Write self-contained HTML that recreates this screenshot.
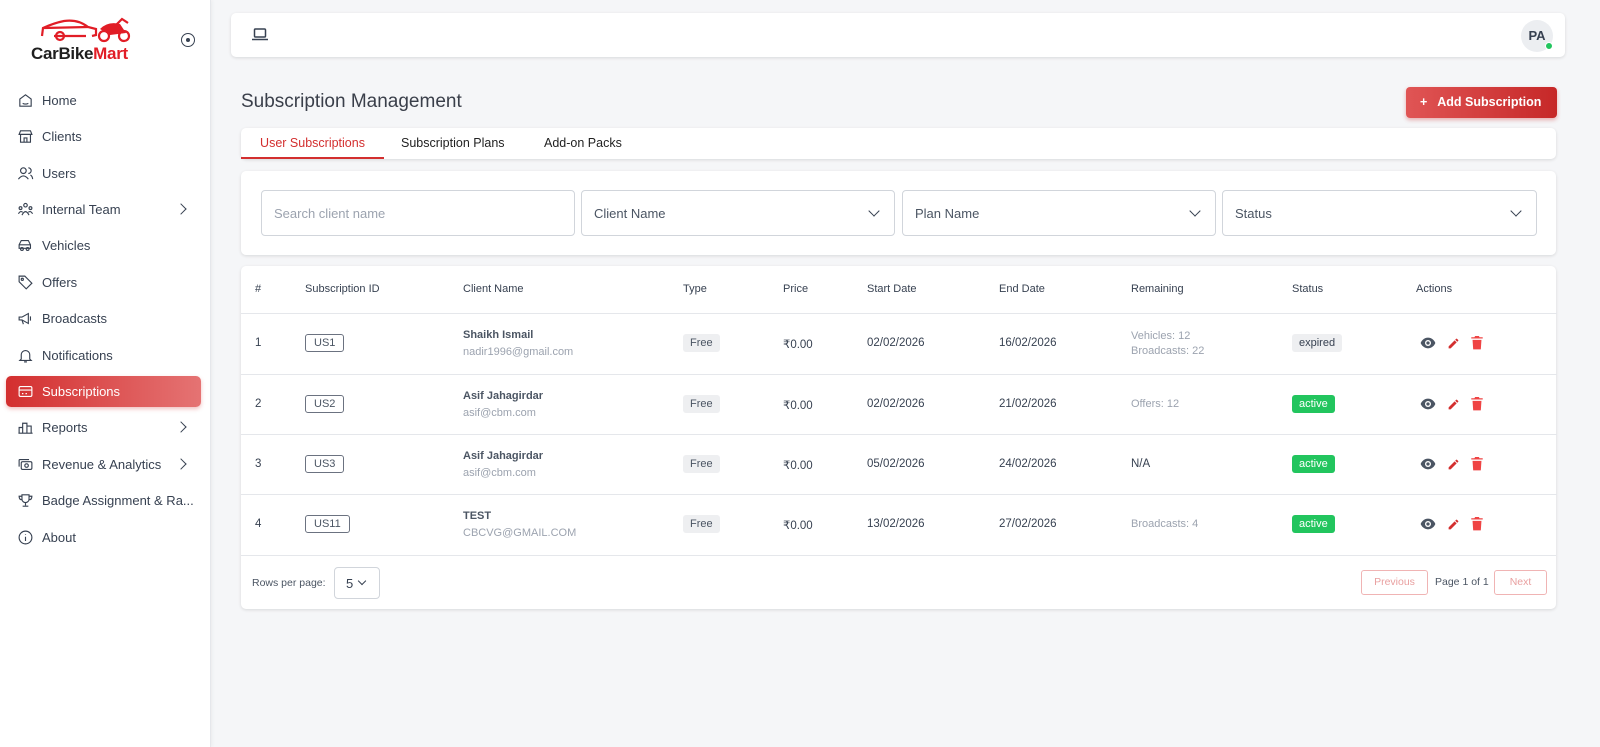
<!DOCTYPE html>
<html><head><meta charset="utf-8"><style>
*{box-sizing:border-box;margin:0;padding:0}
body{width:1600px;height:747px;background:#f5f6f8;font-family:"Liberation Sans",sans-serif;color:#374151;position:relative;overflow:hidden}
.side{position:absolute;left:0;top:0;width:211px;height:747px;background:#fff;border-right:1px solid #e5e7eb;box-shadow:1px 0 4px rgba(0,0,0,.05)}
.nav{position:absolute;left:6px;width:195px;height:31px;display:flex;align-items:center;padding-left:11px;font-size:13px;color:#374151}
.nav svg{width:17px;height:17px;margin-right:8px;stroke:#374151;fill:none;stroke-width:1.6}
.nav .ch{position:absolute;right:16px;width:8px;height:8px;border-right:1.6px solid #374151;border-top:1.6px solid #374151;transform:rotate(45deg);top:11px}
.nav.act{background:linear-gradient(90deg,#d32f2f,#e57373);color:#fff;border-radius:5px;box-shadow:0 2px 4px rgba(200,0,0,.25)}
.nav.act svg{stroke:#fff}
.card{position:absolute;background:#fff;border-radius:5px;box-shadow:0 1px 3px rgba(0,0,0,.12)}
.sel{position:absolute;top:19px;height:46px;border:1px solid #d1d5db;border-radius:4px;font-size:13px;color:#4b5563;padding:15px 12px}
.sel.dd:after{content:"";position:absolute;right:16px;top:16px;width:7px;height:7px;border-right:1.5px solid #374151;border-bottom:1.5px solid #374151;transform:rotate(45deg)}
.th{position:absolute;top:17px;font-size:11px;color:#374151}
.row{position:absolute;left:0;width:1316px;height:61px;border-top:1px solid #e5e7eb;font-size:11.5px}
.row>div{position:absolute}
.id{top:20px;left:64px;border:1px solid #6b7280;border-radius:3px;padding:2px 8px;font-size:11px;color:#4b5563}
.nm{top:15px;left:222px;font-weight:bold;font-size:11px;color:#4b5563}
.em{top:32px;left:222px;color:#9ca3af;font-size:11px}
.fr{top:20px;left:442px;background:#eeeff1;border-radius:3px;padding:3px 7px;font-size:11px;color:#4b5563}
.st{top:20px;left:1051px;border-radius:3px;padding:3px 7px;font-size:11px}
.ac{top:22px;left:1179px;display:flex;gap:11px;align-items:center}
</style></head><body>
<div class="side">
<svg style="position:absolute;left:40px;top:15px" width="92" height="30" viewBox="0 0 92 30"><g fill="none" stroke="#e11d26" stroke-width="2.2"><path d="M2 21 L3 13 Q14 8 24 6 Q38 4 48 12 L56 14 L56 20 L52 21"/><path d="M4 13 L48 12 M14 21 H46"/><circle cx="20" cy="21" r="4"/><circle cx="64" cy="21" r="5"/><circle cx="84" cy="21" r="5"/><path d="M76 10 L82 4 L88 8"/></g><path d="M60 14 Q68 6 80 9 L86 18 L70 20Z" fill="#e11d26"/></svg>
<div style="position:absolute;left:31px;top:44px;font-weight:bold;font-size:17px;letter-spacing:-.3px"><span style="color:#1f1f1f">CarBike</span><span style="color:#e11d26">Mart</span></div>
<div style="position:absolute;left:181px;top:33px;width:14px;height:14px;border:1.6px solid #374151;border-radius:50%"><div style="width:4px;height:4px;background:#374151;border-radius:50%;margin:3.5px"></div></div>
<div class="nav" style="top:85px"><svg viewBox="0 0 24 24"><path d="M4 10 L12 4 L20 10 V20 H4Z"/><path d="M8 16 Q12 18 16 16"/></svg>Home</div>
<div class="nav" style="top:121px"><svg viewBox="0 0 24 24"><path d="M3 9 L5 4 H19 L21 9 H3Z M5 9 V20 H19 V9 M10 20 V14 H14 V20"/></svg>Clients</div>
<div class="nav" style="top:158px"><svg viewBox="0 0 24 24"><circle cx="9" cy="8" r="4"/><path d="M2 20 Q9 11 16 20 M16 4 A4 4 0 0 1 16 12 M19 14 Q22 16 22 20"/></svg>Users</div>
<div class="nav" style="top:194px"><svg viewBox="0 0 24 24"><circle cx="12" cy="6" r="2.5"/><circle cx="5" cy="10" r="2"/><circle cx="19" cy="10" r="2"/><path d="M7 20 Q12 10 17 20 M2 18 Q5 13 8 16 M22 18 Q19 13 16 16"/></svg>Internal Team<span class="ch"></span></div>
<div class="nav" style="top:230px"><svg viewBox="0 0 24 24"><path d="M3 16 V11 L6 5 H16 L19 11 V16 H3Z M3 11 H19"/><circle cx="7" cy="17" r="2"/><circle cx="15" cy="17" r="2"/></svg>Vehicles</div>
<div class="nav" style="top:267px"><svg viewBox="0 0 24 24"><path d="M3 3 H11 L21 13 L13 21 L3 11Z"/><circle cx="7.5" cy="7.5" r="1.5"/></svg>Offers</div>
<div class="nav" style="top:303px"><svg viewBox="0 0 24 24"><path d="M3 10 V14 H7 L16 19 V5 L7 10Z M19 9 V15 M7 14 L9 20"/></svg>Broadcasts</div>
<div class="nav" style="top:340px"><svg viewBox="0 0 24 24"><path d="M6 17 V11 A6 6 0 0 1 18 11 V17 L20 19 H4Z M10 21 H14"/></svg>Notifications</div>
<div class="nav act" style="top:376px"><svg viewBox="0 0 24 24"><rect x="3" y="5" width="18" height="14" rx="2"/><path d="M3 10 H21 M7 15 H9 M12 15 H14"/></svg>Subscriptions</div>
<div class="nav" style="top:412px"><svg viewBox="0 0 24 24"><path d="M3 20 V12 H8 V20 M8 20 V6 H14 V20 M14 20 V10 H20 V20 M2 20 H22"/></svg>Reports<span class="ch"></span></div>
<div class="nav" style="top:449px"><svg viewBox="0 0 24 24"><rect x="6" y="8" width="15" height="11" rx="2"/><path d="M3 15 V6 Q3 5 4 5 H17"/><circle cx="13.5" cy="13.5" r="2.5"/></svg>Revenue &amp; Analytics<span class="ch"></span></div>
<div class="nav" style="top:485px"><svg viewBox="0 0 24 24"><path d="M7 4 H17 V10 A5 5 0 0 1 7 10Z M7 6 H3 Q3 11 7 11 M17 6 H21 Q21 11 17 11 M12 15 V19 M8 20 H16"/></svg>Badge Assignment &amp; Ra...</div>
<div class="nav" style="top:522px"><svg viewBox="0 0 24 24"><circle cx="12" cy="12" r="9"/><path d="M12 11 V17 M12 7 V8"/></svg>About</div>
</div>

<div class="card" style="left:231px;top:13px;width:1334px;height:44px">
<svg style="position:absolute;left:21px;top:15px" width="16" height="13" viewBox="0 0 16 13" fill="none" stroke="#374151" stroke-width="1.5"><rect x="2.5" y="1" width="11" height="8" rx="1"/><path d="M0 11.5 H16"/></svg>
<div style="position:absolute;left:1290px;top:7px;width:32px;height:32px;border-radius:50%;background:#eceef1;font-size:13px;font-weight:bold;color:#374151;text-align:center;line-height:32px">PA</div>
<div style="position:absolute;left:1314px;top:29px;width:8px;height:8px;border-radius:50%;background:#22c55e;border:1px solid #fff"></div>
</div>

<div style="position:absolute;left:241px;top:91px;font-size:19px;color:#3a3f4a">Subscription Management</div>
<div style="position:absolute;left:1406px;top:87px;width:151px;height:31px;border-radius:4px;background:linear-gradient(90deg,#e05555,#c62828);color:#fff;font-size:12.5px;font-weight:bold;line-height:31px;padding-left:14px;box-shadow:0 2px 4px rgba(200,0,0,.3)">+&nbsp;&nbsp; Add Subscription</div>

<div class="card" style="left:241px;top:128px;width:1315px;height:31px;font-size:12.5px">
<div style="position:absolute;left:0;top:0;width:143px;height:31px;border-bottom:2px solid #d32f2f;color:#d32f2f;text-align:center;line-height:31px">User Subscriptions</div>
<div style="position:absolute;left:160px;top:0;line-height:31px;color:#222">Subscription Plans</div>
<div style="position:absolute;left:303px;top:0;line-height:31px;color:#222">Add-on Packs</div>
</div>

<div class="card" style="left:241px;top:171px;width:1315px;height:84px">
<div class="sel" style="left:20px;width:314px;color:#9ca3af">Search client name</div>
<div class="sel dd" style="left:340px;width:314px">Client Name</div>
<div class="sel dd" style="left:661px;width:314px">Plan Name</div>
<div class="sel dd" style="left:981px;width:315px">Status</div>
</div>

<div class="card" style="left:241px;top:266px;width:1315px;height:343px">
<div class="th" style="left:14px">#</div><div class="th" style="left:64px">Subscription ID</div><div class="th" style="left:222px">Client Name</div><div class="th" style="left:442px">Type</div><div class="th" style="left:542px">Price</div><div class="th" style="left:626px">Start Date</div><div class="th" style="left:758px">End Date</div><div class="th" style="left:890px">Remaining</div><div class="th" style="left:1051px">Status</div><div class="th" style="left:1175px">Actions</div>

<div class="row" style="top:47px"><div style="top:23px;left:14px">1</div><div class="id">US1</div><div class="nm">Shaikh Ismail</div><div class="em">nadir1996@gmail.com</div><div class="fr">Free</div><div style="top:23px;left:542px">₹0.00</div><div style="top:23px;left:626px">02/02/2026</div><div style="top:23px;left:758px">16/02/2026</div><div style="top:15px;left:890px;color:#9ca3af;font-size:11px;line-height:15px">Vehicles: 12<br>Broadcasts: 22</div><div class="st" style="background:#eeeff1;color:#374151">expired</div><div class="ac">AC</div></div>
<div class="row" style="top:108px"><div style="top:23px;left:14px">2</div><div class="id">US2</div><div class="nm">Asif Jahagirdar</div><div class="em">asif@cbm.com</div><div class="fr">Free</div><div style="top:23px;left:542px">₹0.00</div><div style="top:23px;left:626px">02/02/2026</div><div style="top:23px;left:758px">21/02/2026</div><div style="top:23px;left:890px;color:#9ca3af;font-size:11px">Offers: 12</div><div class="st" style="background:#22c55e;color:#fff">active</div><div class="ac">AC</div></div>
<div class="row" style="top:168px"><div style="top:23px;left:14px">3</div><div class="id">US3</div><div class="nm">Asif Jahagirdar</div><div class="em">asif@cbm.com</div><div class="fr">Free</div><div style="top:23px;left:542px">₹0.00</div><div style="top:23px;left:626px">05/02/2026</div><div style="top:23px;left:758px">24/02/2026</div><div style="top:23px;left:890px">N/A</div><div class="st" style="background:#22c55e;color:#fff">active</div><div class="ac">AC</div></div>
<div class="row" style="top:228px"><div style="top:23px;left:14px">4</div><div class="id">US11</div><div class="nm">TEST</div><div class="em">CBCVG@GMAIL.COM</div><div class="fr">Free</div><div style="top:23px;left:542px">₹0.00</div><div style="top:23px;left:626px">13/02/2026</div><div style="top:23px;left:758px">27/02/2026</div><div style="top:23px;left:890px;color:#9ca3af;font-size:11px">Broadcasts: 4</div><div class="st" style="background:#22c55e;color:#fff">active</div><div class="ac">AC</div></div>

<div style="position:absolute;left:0;top:289px;width:1315px;border-top:1px solid #e5e7eb"></div>
<div style="position:absolute;left:11px;top:311px;font-size:10.5px;color:#4b5563">Rows per page:</div>
<div style="position:absolute;left:93px;top:301px;width:46px;height:32px;border:1px solid #d1d5db;border-radius:4px;font-size:13px;padding:8px 11px">5<span style="position:absolute;left:24px;top:10px;width:6px;height:6px;border-right:1.4px solid #374151;border-bottom:1.4px solid #374151;transform:rotate(45deg)"></span></div>
<div style="position:absolute;left:1120px;top:304px;width:67px;height:25px;border:1px solid #f0b4b4;border-radius:3px;font-size:10.5px;color:#e9a0a0;text-align:center;line-height:23px">Previous</div>
<div style="position:absolute;left:1194px;top:310px;font-size:10.5px;color:#4b5563">Page 1 of 1</div>
<div style="position:absolute;left:1253px;top:304px;width:53px;height:25px;border:1px solid #f0b4b4;border-radius:3px;font-size:10.5px;color:#e9a0a0;text-align:center;line-height:23px">Next</div>
</div>
<script>
document.querySelectorAll('.ac').forEach(function(e){e.innerHTML='<svg width="16" height="12" viewBox="0 0 24 18"><path d="M12 1C6 1 2 6 1 9c1 3 5 8 11 8s10-5 11-8C22 6 18 1 12 1z" fill="#4b5563"/><circle cx="12" cy="9" r="4.5" fill="#fff"/><circle cx="12" cy="9" r="2.5" fill="#4b5563"/></svg><svg width="13" height="13" viewBox="0 0 24 24"><path d="M3 17.25V21h3.75L17.8 9.94l-3.75-3.75L3 17.25zM20.7 7.04a1 1 0 0 0 0-1.41l-2.34-2.34a1 1 0 0 0-1.41 0l-1.83 1.83 3.75 3.75 1.83-1.83z" fill="#d32f2f"/></svg><svg width="12" height="14" viewBox="0 0 18 22"><path d="M2 6h14l-1 15H3zM0 2h5l1-2h6l1 2h5v2H0z" fill="#ef4444"/></svg>';});
</script>
</body></html>
